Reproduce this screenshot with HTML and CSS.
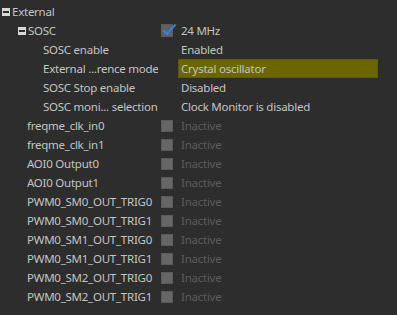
FILE: index.html
```html
<!DOCTYPE html>
<html lang="en">
<head>
  <meta charset="UTF-8" />
  <title>Clock Outputs</title>
  <link rel="stylesheet" href="styles.css">
</head>
<body>

  <div class="tree">
    <div class="row">
      <div class="label lvl0"><span class="expander"></span>External</div>
      <div class="icon"></div>
      <div class="value"></div>
    </div>
    <div class="row">
      <div class="label lvl1"><span class="expander"></span>SOSC</div>
      <div class="icon"><span class="check checked">
        <svg width="16" height="14" viewBox="0 0 16 14"><path d="M2.5 7.5 L6 11 L14.5 1.5" fill="none" stroke="#3b7ddd" stroke-width="2.2"/></svg>
      </span></div>
      <div class="value">24 MHz</div>
    </div>
    <div class="row">
      <div class="label lvl2">SOSC enable</div>
      <div class="icon"></div>
      <div class="value">Enabled</div>
    </div>
    <div class="row">
      <div class="label lvl2">External ...rence mode</div>
      <div class="icon"></div>
      <div class="value highlight">Crystal oscillator</div>
    </div>
    <div class="row">
      <div class="label lvl2">SOSC Stop enable</div>
      <div class="icon"></div>
      <div class="value">Disabled</div>
    </div>
    <div class="row">
      <div class="label lvl2">SOSC moni... selection</div>
      <div class="icon"></div>
      <div class="value">Clock Monitor is disabled</div>
    </div>
    <div class="row">
      <div class="label lvl1 leaf">freqme_clk_in0</div>
      <div class="icon"><span class="check"></span></div>
      <div class="value inactive">Inactive</div>
    </div>
    <div class="row">
      <div class="label lvl1 leaf">freqme_clk_in1</div>
      <div class="icon"><span class="check"></span></div>
      <div class="value inactive">Inactive</div>
    </div>
    <div class="row">
      <div class="label lvl1 leaf">AOI0 Output0</div>
      <div class="icon"><span class="check"></span></div>
      <div class="value inactive">Inactive</div>
    </div>
    <div class="row">
      <div class="label lvl1 leaf">AOI0 Output1</div>
      <div class="icon"><span class="check"></span></div>
      <div class="value inactive">Inactive</div>
    </div>
    <div class="row">
      <div class="label lvl1 leaf">PWM0_SM0_OUT_TRIG0</div>
      <div class="icon"><span class="check"></span></div>
      <div class="value inactive">Inactive</div>
    </div>
    <div class="row">
      <div class="label lvl1 leaf">PWM0_SM0_OUT_TRIG1</div>
      <div class="icon"><span class="check"></span></div>
      <div class="value inactive">Inactive</div>
    </div>
    <div class="row">
      <div class="label lvl1 leaf">PWM0_SM1_OUT_TRIG0</div>
      <div class="icon"><span class="check"></span></div>
      <div class="value inactive">Inactive</div>
    </div>
    <div class="row">
      <div class="label lvl1 leaf">PWM0_SM1_OUT_TRIG1</div>
      <div class="icon"><span class="check"></span></div>
      <div class="value inactive">Inactive</div>
    </div>
    <div class="row">
      <div class="label lvl1 leaf">PWM0_SM2_OUT_TRIG0</div>
      <div class="icon"><span class="check"></span></div>
      <div class="value inactive">Inactive</div>
    </div>
    <div class="row">
      <div class="label lvl1 leaf">PWM0_SM2_OUT_TRIG1</div>
      <div class="icon"><span class="check"></span></div>
      <div class="value inactive">Inactive</div>
    </div>
  </div>

</body>
</html>
```

FILE: styles.css
```css
* {
  box-sizing: border-box;
}

body {
  margin: 0;
  padding: 0;
  background: #2d2d2d;
  font-family: "Noto Sans", "Open Sans", sans-serif;
  font-size: 11.5px;
  letter-spacing: -0.25px;
  color: #c4c4c4;
  width: 397px;
  height: 315px;
  overflow: hidden;
}

.tree {
  padding-top: 2px;
}

.row {
  display: grid;
  grid-template-columns: 158px 20px 200px;
  height: 19px;
  align-items: center;
}

.label {
  display: flex;
  align-items: center;
  white-space: nowrap;
  overflow: hidden;
  height: 19px;
}

.lvl0 {
  padding-left: 2px;
}

.lvl1 {
  padding-left: 18px;
}

.lvl1.leaf {
  padding-left: 27px;
}

.lvl2 {
  padding-left: 43px;
}

.expander {
  width: 8px;
  height: 8px;
  background: #d8d8d8;
  margin-right: 2px;
  position: relative;
  flex: none;
}

.expander::after {
  content: "";
  position: absolute;
  left: 1px;
  top: 3px;
  width: 6px;
  height: 2px;
  background: #2d2d2d;
}

.icon {
  display: flex;
  align-items: center;
  padding-left: 3px;
  height: 19px;
}

.check {
  width: 12px;
  height: 12px;
  background: #666666;
  border: 1px solid #5a5a5a;
  position: relative;
}

.check.checked {
  width: 12px;
  height: 13px;
  background: #5f6066;
}

.check svg {
  position: absolute;
  left: -1px;
  top: -2px;
}

.value {
  height: 19px;
  line-height: 19px;
  padding-left: 3px;
  white-space: nowrap;
}

.value.highlight {
  background: #6b6600;
  border: 1px solid #5e5a0a;
  line-height: 17px;
  padding-left: 2px;
}

.value.inactive {
  color: #5c5c5c;
}
```
